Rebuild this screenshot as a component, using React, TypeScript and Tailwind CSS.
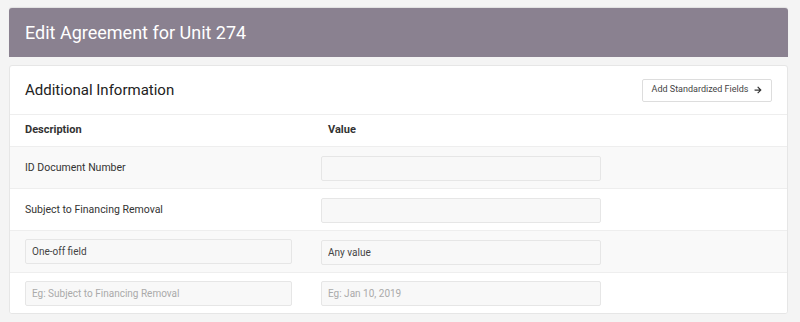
import { FaArrowRight } from "react-icons/fa";

type Row = {
  label?: string;
  labelInput?: { value?: string; placeholder?: string };
  value?: string;
  placeholder?: string;
};

const rows: Row[] = [
  { label: "ID Document Number" },
  { label: "Subject to Financing Removal" },
  { labelInput: { value: "One-off field" }, value: "Any value" },
  {
    labelInput: { placeholder: "Eg: Subject to Financing Removal" },
    placeholder: "Eg: Jan 10, 2019",
  },
];

function Field(props: { value?: string; placeholder?: string; width: string }) {
  return (
    <input
      type="text"
      readOnly
      defaultValue={props.value}
      placeholder={props.placeholder}
      className={`${props.width} h-[25px] rounded-[2px] border border-[#e6e6e6] bg-[#f8f8f8] px-[6px] text-[10px] text-[#444] placeholder:text-[#aaa] outline-none`}
    />
  );
}

export default function App() {
  return (
    <div className="min-h-[322px] bg-[#f4f4f4] pl-[9px] pr-[12px] pt-[8px] pb-[8px] font-['Roboto',sans-serif]">
      {/* Page title */}
      <div className="flex h-[49px] items-center rounded-t-[3px] bg-[#8a8190] px-4 shadow-[0_-1px_1px_rgba(0,0,0,0.08)]">
        <h1 className="text-[18px] font-normal text-white">Edit Agreement for Unit 274</h1>
      </div>

      {/* Card */}
      <div className="mt-[8px] overflow-hidden rounded-[3px] border border-[#e6e6e6] bg-white">
        <div className="flex h-[49px] items-center justify-between border-b border-[#eee] pl-[15px] pr-[15px]">
          <h2 className="text-[15px] font-normal text-[#222]">Additional Information</h2>
          <button
            type="button"
            className="flex h-[23px] w-[130px] items-center justify-center gap-[6px] rounded-[2px] border border-[#ddd] bg-white text-[9px] text-[#444]"
          >
            Add Standardized Fields
            <FaArrowRight size={8} className="text-[#333]" />
          </button>
        </div>

        {/* Table head */}
        <div className="flex h-[32px] items-center border-b border-[#eee] pl-[15px] pr-4 text-[11px] font-bold text-[#333]">
          <div className="w-[267px]">Description</div>
          <div className="ml-[36px]">Value</div>
        </div>

        {rows.map((row, i) => {
          const last = i === rows.length - 1;
          return (
            <div
              key={i}
              className={`flex items-center pl-[15px] pr-4 ${last ? "h-[40px]" : "h-[42px] border-b border-[#eee]"} ${i % 2 === 0 ? "bg-[#f9f9f9]" : "bg-white"}`}
            >
              <div className="w-[267px] text-[10.5px] text-[#333]">
                {row.labelInput ? (
                  <Field
                    width="w-[267px]"
                    value={row.labelInput.value}
                    placeholder={row.labelInput.placeholder}
                  />
                ) : (
                  row.label
                )}
              </div>
              <div className="ml-[29px]">
                <Field width="w-[280px]" value={row.value} placeholder={row.placeholder} />
              </div>
            </div>
          );
        })}
      </div>
    </div>
  );
}
